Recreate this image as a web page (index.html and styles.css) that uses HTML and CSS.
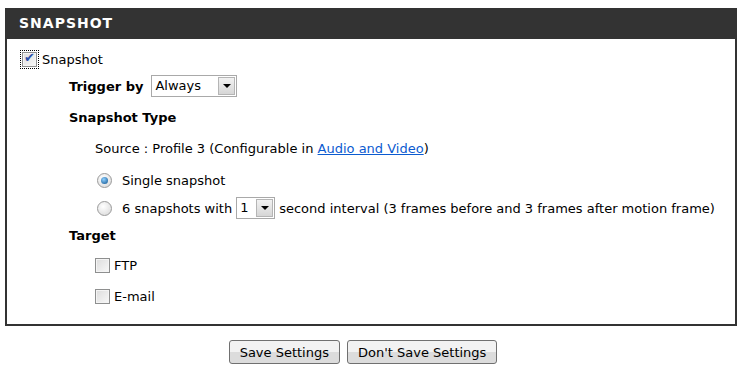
FILE: index.html
```html
<!DOCTYPE html>
<html lang="en">
<head>
    <meta charset="UTF-8">
    <title>Snapshot</title>
    <link rel="stylesheet" href="styles.css">
</head>
<body>
    <div class="panel">
        <div class="panel-head">SNAPSHOT</div>
        <div class="panel-body">
            <label class="row top">
                <span class="chk checked focus"><span class="tick">&#10004;</span></span>Snapshot
            </label>

            <div class="indent">
                <div class="row trigger">
                    <b>Trigger by</b>
                    <span class="sel wide"><span class="sel-text">Always</span><span class="sel-btn"><span class="arrow"></span></span></span>
                </div>

                <div class="row heading"><b>Snapshot Type</b></div>

                <div class="indent2">
                    <div class="row source"><span>Source : Profile 3 (Configurable in <a href="#">Audio and Video</a>)</span></div>
                    <div class="row radio-row">
                        <span class="radio on"><span class="dot"></span></span>Single snapshot
                    </div>
                    <div class="row radio-row multi">
                        <span class="radio"></span>6 snapshots with
                        <span class="sel small"><span class="sel-text">1</span><span class="sel-btn"><span class="arrow"></span></span></span>
                        second interval (3 frames before and 3 frames after motion frame)
                    </div>
                </div>

                <div class="row heading target"><b>Target</b></div>

                <div class="indent2">
                    <label class="row opt"><span class="chk"></span>FTP</label>
                    <label class="row opt"><span class="chk"></span>E-mail</label>
                </div>
            </div>
        </div>
    </div>

    <div class="buttons">
        <button type="button" class="btn save">Save Settings</button>
        <button type="button" class="btn">Don't Save Settings</button>
    </div>
</body>
</html>
```

FILE: styles.css
```css
body {
    margin: 8px 4px 0 5px;
    font-family: "DejaVu Sans", Tahoma, sans-serif;
    font-size: 13px;
    color: #000;
    background: #fff;
}

/* Panel */
.panel {
    width: 732px;
}

.panel-head {
    background-color: #333;
    color: #fff;
    height: 31px;
    line-height: 31px;
    padding-left: 14px;
    font-family: "DejaVu Sans", Verdana, sans-serif;
    font-weight: bold;
    font-size: 14px;
    letter-spacing: 1px;
}

.panel-body {
    border: 2px solid #333;
    border-top: none;
    height: 287px;
    box-sizing: border-box;
    padding-top: 10px;
    padding-left: 13px;
}

.row {
    display: flex;
    align-items: center;
}

.top {
    height: 20px;
}

.indent {
    padding-left: 49px;
}

.indent2 {
    padding-left: 26px;
}

.trigger {
    margin-top: 6px;
    height: 22px;
}

.trigger .sel {
    margin-left: 8px;
}

.heading {
    margin-top: 10px;
    height: 20px;
}

.source {
    margin-top: 11px;
    height: 20px;
}

.radio-row {
    margin-top: 12px;
    height: 20px;
}

.multi {
    height: 22px;
    margin-top: 7px;
}

.target {
    margin-top: 6px;
}

.opt {
    margin-top: 10px;
    height: 20px;
}

.opt + .opt {
    margin-top: 11px;
}

a {
    color: #0b5bd0;
}

/* Checkbox */
.chk {
    width: 13px;
    height: 13px;
    border: 1px solid #8e8f8f;
    background: linear-gradient(135deg, #dcdcdc, #f8f8f8);
    box-shadow: inset 0 0 0 1px #f4f4f4;
    margin-right: 4px;
    position: relative;
    flex: none;
}

.chk.focus {
    outline: 1px dotted #000;
    outline-offset: 1px;
    margin-left: 2px;
    margin-right: 5px;
}

.tick {
    position: absolute;
    left: 1px;
    top: -3px;
    font-size: 13px;
    color: #2b4fa8;
}

/* Radio */
.radio {
    width: 13px;
    height: 13px;
    border: 1px solid #9a9a9a;
    border-radius: 50%;
    background: radial-gradient(circle at 40% 35%, #fff, #d6d6d6);
    margin: 0 10px 0 2px;
    position: relative;
    flex: none;
}

.radio .dot {
    position: absolute;
    left: 3px;
    top: 3px;
    width: 7px;
    height: 7px;
    border-radius: 50%;
    background: radial-gradient(circle at 40% 35%, #8fd0ff, #0a4f8c);
}

/* Selects */
.sel {
    display: inline-flex;
    border: 1px solid #a9a9a9;
    height: 20px;
    background: #fff;
    margin: 0 4px;
}

.sel-text {
    padding-left: 3px;
    line-height: 20px;
    flex: 1;
}

.wide {
    width: 84px;
}

.small {
    width: 37px;
}

.sel-btn {
    width: 17px;
    height: 18px;
    margin: 1px;
    background: linear-gradient(#f2f2f2, #d6d6d6);
    border: 1px solid #b5b5b5;
    box-sizing: border-box;
    display: flex;
    align-items: center;
    justify-content: center;
}

.arrow {
    width: 0;
    height: 0;
    border-left: 4px solid transparent;
    border-right: 4px solid transparent;
    border-top: 4px solid #000;
}

/* Buttons */
.buttons {
    display: flex;
    justify-content: center;
    gap: 7px;
    margin-top: 14px;
    padding-right: 16px;
}

.btn {
    font-family: "DejaVu Sans", Tahoma, sans-serif;
    font-size: 13px;
    height: 24px;
    padding: 0 10px;
    border: 1px solid #707070;
    border-radius: 3px;
    background: linear-gradient(#f2f2f2 50%, #dcdcdc 50%);
}
```
